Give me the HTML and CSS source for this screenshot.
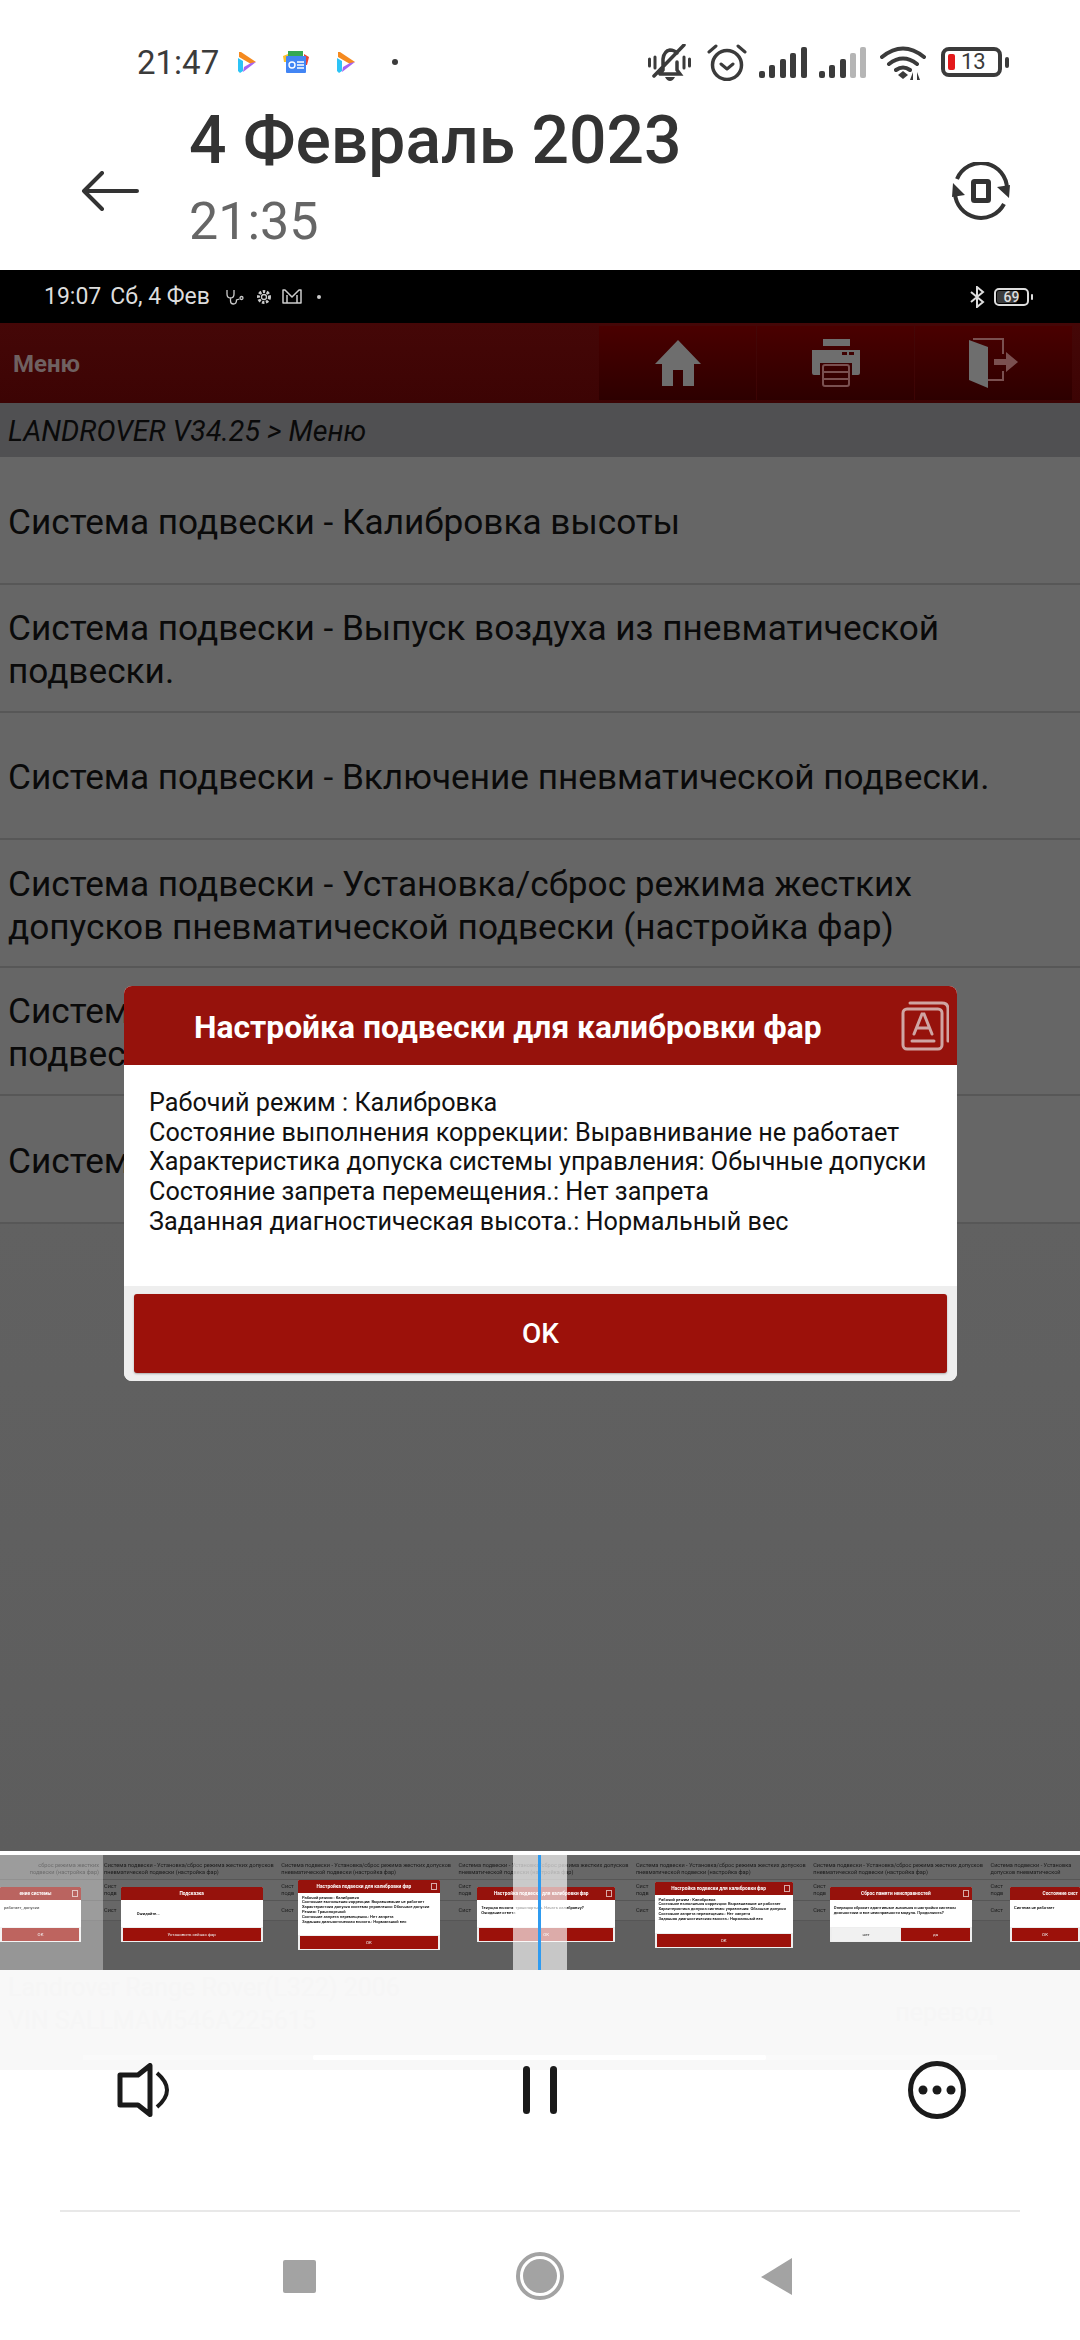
FILE: index.html
```html
<!DOCTYPE html>
<html lang="ru">
<head>
<meta charset="utf-8">
<title>4 Февраль 2023</title>
<link rel="stylesheet" href="styles.css">
</head>
<body>
<div class="app">
  <section class="top">
    <div class="sb">
      <span class="sb-time">21:47</span>
      <svg class="i-play1" width="18" height="21" viewBox="0 0 18 21"><path fill="#f58a1f" d="M1 0h2l15 10-5 2L1 5z"/><path fill="#2cc3f6" d="M0 6l5 3v10l-3 2-2-2z"/><path fill="#a663f3" d="M6 15l7-4 5-1L5 20z"/></svg>
      <svg class="i-news" width="26" height="22" viewBox="0 0 26 22"><path fill="#34a853" d="M5 0h15v5H5z"/><path fill="#fbc02d" d="M0 5l5-2v8H1z"/><path fill="#ea4335" d="M21 3l5 3-2 8h-3z"/><rect x="3" y="5" width="20" height="17" rx="1" fill="#4285f4"/><circle cx="9" cy="14" r="3" fill="none" stroke="#fff" stroke-width="1.4"/><path stroke="#fff" stroke-width="1.3" d="M14 11h7M14 14h7M14 17h7"/></svg>
      <svg class="i-play2" width="18" height="21" viewBox="0 0 18 21"><path fill="#f58a1f" d="M1 0h2l15 10-5 2L1 5z"/><path fill="#2cc3f6" d="M0 6l5 3v10l-3 2-2-2z"/><path fill="#a663f3" d="M6 15l7-4 5-1L5 20z"/></svg>
      <span class="sb-dot"></span>
      <span class="sb-right">
        <svg width="43" height="37" viewBox="0 0 43 37" fill="none" stroke="#3b3b3b" stroke-linecap="round"><path stroke-width="3" d="M1.500 15v7M7 13v11M36 13v11M41.500 15v7"/><path stroke-width="3.500" d="M12 30l3-4v-11q1-8 7-9 4 0 7 3M29 18v8l3 4H12M36 1L6 32"/><path fill="#3b3b3b" stroke="none" d="M17 33h10q-2 4-5 4t-5-4z"/></svg>
        <svg class="m16" width="40" height="37" viewBox="0 0 40 37" fill="none" stroke="#3b3b3b" stroke-linecap="round" stroke-linejoin="round"><circle cx="20" cy="21" r="14.500" stroke-width="3.500"/><path stroke-width="3" d="M14 20l6 5 6-5M2 8l7-6M38 8l-7-6"/></svg>
        <svg class="m12" width="48" height="31" viewBox="0 0 48 31" fill="#3b3b3b"><rect y="24" width="6" height="7" rx="2"/><rect x="10" y="18" width="6" height="13" rx="2"/><rect x="21" y="12" width="6" height="19" rx="2"/><rect x="31" y="6" width="6" height="25" rx="2"/><rect x="42" y="0" width="6" height="31" rx="2"/></svg>
        <svg class="m12" width="47" height="31" viewBox="0 0 47 31" fill="#3b3b3b"><rect y="24" width="6" height="7" rx="2"/><rect x="10" y="18" width="6" height="13" rx="2"/><rect x="21" y="12" width="6" height="19" rx="2"/><rect x="31" y="6" width="6" height="25" rx="2" fill="#b5b5b5"/><rect x="41" y="0" width="6" height="31" rx="2" fill="#b5b5b5"/></svg>
        <svg class="m14" width="46" height="35" viewBox="0 0 46 35" fill="none" stroke="#3b3b3b" stroke-width="4" stroke-linecap="round"><path d="M2 12q21-17 42 0M9 19q14-11 28 0M16 25q7-5 14 0"/><path fill="#3b3b3b" stroke="none" d="M23 26l5 4-5 4-5-4zM33 27v8h-3zM37 27l3 8h-3z"/></svg>
        <span class="batt"><span class="batt-red"></span><span class="batt-num">13</span></span>
        <span class="batt-tip"></span>
      </span>
    </div>
    <div class="hdr">
      <svg class="back" width="58" height="40" viewBox="0 0 58 40" fill="none" stroke="#333" stroke-width="4" stroke-linecap="round" stroke-linejoin="round"><path d="M21 2L3 20l18 18M3 20h53"/></svg>
      <div class="hdr-text">
        <div class="hdr-title">4 Февраль 2023</div>
        <div class="hdr-sub">21:35</div>
      </div>
      <svg class="rot" width="58" height="58" viewBox="0 0 58 58" fill="none" stroke="#333"><path stroke-width="4" d="M5 17A26 26 0 0 1 55 27M52 42A26 26 0 0 1 3 31"/><path fill="#333" stroke="none" d="M45 25l13-2-1 13zM13 33L0 35l1-14z"/><rect x="21.500" y="19.500" width="15" height="19" rx="1" stroke-width="5"/></svg>
    </div>
  </section>

  <section class="shot">
    <div class="blk">
      <span class="blk-time">19:07</span><span class="blk-date">Сб, 4 Фев</span>
      <svg class="i-steth" width="18" height="16" viewBox="0 0 18 16" fill="none" stroke="#ccc" stroke-width="1.300"><path d="M1 1v4q0 4 3.500 4T8 5V1M4.500 9v3q0 3 3 3t3-4l3-1"/><circle cx="15.500" cy="9" r="1.500"/></svg>
      <svg class="i-gear" width="18" height="18" viewBox="0 0 18 18" fill="none" stroke="#ccc"><circle cx="9" cy="9" r="5.500" stroke-width="3" stroke-dasharray="2.500 1.500"/><circle cx="9" cy="9" r="2.500" stroke-width="1.300"/></svg>
      <svg class="i-m" width="20" height="15" viewBox="0 0 20 15" fill="none" stroke="#ccc" stroke-width="1.500" stroke-linejoin="round"><path d="M1 14V1h2l7 7 7-7h2v13zM5 14V6M15 14V6"/></svg>
      <span class="blk-dot"></span>
      <span class="blk-right">
        <svg width="15" height="22" viewBox="0 0 15 22" fill="none" stroke="#ddd" stroke-width="2"><path d="M1 6l12 10-6 5V1l6 5L1 16"/></svg>
        <span class="mbatt"><span class="mbatt-fill"></span><span class="mbatt-num">69</span></span>
        <span class="mbatt-tip"></span>
      </span>
    </div>
    <div class="bar">
      <span class="bar-title">Меню</span>
      <div class="tools">
        <div class="tool"><svg width="46" height="46" viewBox="0 0 46 46" fill="#6e6e6e"><path d="M23 0L46 24h-7v22H28V30H18v16H7V24H0z"/></svg></div>
        <div class="tool"><svg width="48" height="48" viewBox="0 0 48 48"><path fill="#6e6e6e" d="M11 0h27v7H11zM0 11h48v23q0 2-2 2h-6V24H8v12H2q-2 0-2-2z"/><rect x="11" y="26" width="26" height="21" rx="2" fill="none" stroke="#7a5050" stroke-width="2"/><path stroke="#7a5050" stroke-width="2" d="M11 33h26M11 40h26"/><path fill="#3f0000" d="M30 13h5v3h-5zM37 13h5v3h-5z"/></svg></div>
        <div class="tool"><svg width="50" height="50" viewBox="0 0 50 50"><path fill="none" stroke="#7a5050" stroke-width="2" d="M4 1h30v15M34 33v9H18"/><path fill="#6e6e6e" d="M0 2l19 7v41L0 42z"/><path fill="#7a5050" d="M25 21h12v-7l12 10-12 10v-7H25z"/></svg></div>
      </div>
    </div>
    <div class="path">LANDROVER V34.25 &gt; Меню</div>
    <div class="list">
      <div class="row">Система подвески - Калибровка высоты</div>
      <div class="row">Система подвески - Выпуск воздуха из пневматической подвески.</div>
      <div class="row">Система подвески - Включение пневматической подвески.</div>
      <div class="row">Система подвески - Установка/сброс режима жестких допусков пневматической подвески (настройка фар)</div>
      <div class="row">Система подвески - Настройка высоты<br>подвески</div>
      <div class="row">Система подвески - Сброс памяти неисправностей</div>
    </div>
    <div class="dlg">
      <div class="dlg-head">
        <span class="dlg-title">Настройка подвески для калибровки фар</span>
        <svg class="dlg-icon" width="48" height="50" viewBox="0 0 48 50" fill="none" stroke="#cfa5a3" stroke-width="3" stroke-linecap="round"><rect x="2" y="8" width="39" height="40" rx="4"/><path d="M9 2h32q6 0 6 6v32"/><path d="M13 33l8-20h2l8 20M16 27h12M11 40h22"/></svg>
      </div>
      <div class="dlg-body">
        <div>Рабочий режим : Калибровка</div>
        <div>Состояние выполнения коррекции: Выравнивание не работает</div>
        <div>Характеристика допуска системы управления: Обычные допуски</div>
        <div>Состояние запрета перемещения.: Нет запрета</div>
        <div>Заданная диагностическая высота.: Нормальный вес</div>
      </div>
      <div class="dlg-foot"><div class="dlg-btn">OK</div></div>
    </div>
  </section>

  <div class="sep"></div>

  <section class="strip">
    <div class="track">
      <div class="thumb t-first">
        <div class="t-row t-r1"><p class="t-end">сброс режима жестких</p><p class="t-end">подвески (настройка фар)</p></div>
        <div class="t-row t-r2"></div>
        <div class="t-row t-r3"></div>
        <div class="t-wrap t-wrap-l"><div class="t-dlg t-w81"><div class="t-head t-has-ico">ение системы<span class="t-ico"></span></div><div class="t-body t-b1"><p>работает, допуски</p></div><div class="t-foot"><span class="t-btn">OK</span></div></div></div>
      </div>
      <div class="thumb">
        <div class="t-row t-r1">Система подвески - Установка/сброс режима жестких допусков пневматической подвески (настройка фар)</div>
        <div class="t-row t-r2">Сист<br>подв</div>
        <div class="t-row t-r3">Сист</div>
        <div class="t-wrap"><div class="t-dlg t-w142"><div class="t-head">Подсказка</div><div class="t-body t-b1"><p class="t-ind">Ожидайте...</p></div><div class="t-foot"><span class="t-btn">Установить сейчас фар</span></div></div></div>
      </div>
      <div class="thumb">
        <div class="t-row t-r1">Система подвески - Установка/сброс режима жестких допусков пневматической подвески (настройка фар)</div>
        <div class="t-row t-r2">Сист<br>подв</div>
        <div class="t-row t-r3">Сист</div>
        <div class="t-wrap"><div class="t-dlg t-w142"><div class="t-head t-has-ico">Настройка подвески для калибровки фар<span class="t-ico"></span></div><div class="t-body t-b2"><p>Рабочий режим : Калибровка</p><p>Состояние выполнения коррекции: Выравнивание не работает</p><p>Характеристика допуска системы управления: Обычные допуски</p><p>Режим: Транспортный</p><p>Состояние запрета перемещения.: Нет запрета</p><p>Заданная диагностическая высота.: Нормальный вес</p></div><div class="t-foot"><span class="t-btn">OK</span></div></div></div>
      </div>
      <div class="thumb">
        <div class="t-row t-r1">Система подвески - Установка/сброс режима жестких допусков пневматической подвески (настройка фар)</div>
        <div class="t-row t-r2">Сист<br>подв</div>
        <div class="t-row t-r3">Сист</div>
        <div class="t-wrap"><div class="t-dlg t-w138"><div class="t-head t-has-ico">Настройка подвески для калибровки фар<span class="t-ico"></span></div><div class="t-body t-b1"><p>Текущая высота: транспортная. Начать калибровку?</p><p>Ожидание ответа</p></div><div class="t-foot"><span class="t-btn">OK</span></div></div></div>
      </div>
      <div class="thumb">
        <div class="t-row t-r1">Система подвески - Установка/сброс режима жестких допусков пневматической подвески (настройка фар)</div>
        <div class="t-row t-r2">Сист<br>подв</div>
        <div class="t-row t-r3">Сист</div>
        <div class="t-wrap"><div class="t-dlg t-w138"><div class="t-head t-has-ico">Настройка подвески для калибровки фар<span class="t-ico"></span></div><div class="t-body t-b3"><p>Рабочий режим : Калибровка</p><p>Состояние выполнения коррекции: Выравнивание не работает</p><p>Характеристика допуска системы управления: Обычные допуски</p><p>Состояние запрета перемещения.: Нет запрета</p><p>Заданная диагностическая высота.: Нормальный вес</p></div><div class="t-foot"><span class="t-btn">OK</span></div></div></div>
      </div>
      <div class="thumb">
        <div class="t-row t-r1">Система подвески - Установка/сброс режима жестких допусков пневматической подвески (настройка фар)</div>
        <div class="t-row t-r2">Сист<br>подв</div>
        <div class="t-row t-r3">Сист</div>
        <div class="t-wrap"><div class="t-dlg t-w142"><div class="t-head t-has-ico">Сброс памяти неисправностей<span class="t-ico"></span></div><div class="t-body t-b1"><p>Операция сбросит адаптивные значения и настройки системы диагностики и все неисправности модуля. Продолжить?</p></div><div class="t-foot t-two"><span class="t-btn t-no">нет</span><span class="t-btn">да</span></div></div></div>
      </div>
      <div class="thumb t-last">
        <div class="t-row t-r1">Система подвески - Установка<br>допусков пневматической</div>
        <div class="t-row t-r2">Сист<br>подв</div>
        <div class="t-row t-r3">Сист</div>
        <div class="t-wrap t-wrap-r"><div class="t-dlg t-w70"><div class="t-head t-head-l">Состояние сист</div><div class="t-body t-b1"><p>Система не работает</p></div><div class="t-foot"><span class="t-btn">OK</span></div></div></div>
      </div>
    </div>
    <div class="veil-left"></div>
    <div class="veil-mid"></div>
    <div class="playhead"></div>
  </section>

  <section class="info">
    <div class="info-meta">
      <div class="info-text">
        <div>Landrover Range Rover(L322) 2006</div>
        <div>VIN SALLMAM546A225615</div>
      </div>
      <div class="info-tr">перевод</div>
    </div>
    <div class="prog"><div class="prog-on"></div></div>
  </section>

  <section class="ctl">
    <svg width="52" height="54" viewBox="0 0 52 54" fill="none" stroke="#1a1a1a" stroke-width="5" stroke-linejoin="round"><path d="M3 12h18L33 2.500v49L21 42H3z"/><path stroke-width="4" d="M40 10q20 17 0 34"/></svg>
    <svg width="34" height="48" viewBox="0 0 34 48" fill="#1a1a1a"><rect width="7" height="48" rx="3.500"/><rect x="27" width="7" height="48" rx="3.500"/></svg>
    <svg width="58" height="58" viewBox="0 0 58 58" fill="#1a1a1a"><circle cx="29" cy="29" r="26.500" fill="none" stroke="#1a1a1a" stroke-width="5"/><circle cx="15" cy="29" r="4.500"/><circle cx="29" cy="29" r="4.500"/><circle cx="43" cy="29" r="4.500"/></svg>
  </section>

  <div class="rule"></div>

  <nav class="nav">
    <svg width="33" height="33" viewBox="0 0 33 33"><rect width="33" height="33" rx="2" fill="#a3a3a3"/></svg>
    <svg width="48" height="48" viewBox="0 0 48 48"><circle cx="24" cy="24" r="22" fill="none" stroke="#a3a3a3" stroke-width="4"/><circle cx="24" cy="24" r="17" fill="#a3a3a3"/></svg>
    <svg width="31" height="37" viewBox="0 0 31 37"><path fill="#a3a3a3" d="M31 0v37L0 19z"/></svg>
  </nav>
</div>
</body>
</html>
```
FILE: styles.css
```css
* { box-sizing: border-box; }
html, body { margin: 0; padding: 0; background: #fff; }
body { font-family: Roboto, "Noto Sans", sans-serif; }
.app { width: 1080px; height: 2340px; overflow: hidden; display: flex; flex-direction: column; background: #fff; }

/* top app header */
.top { height: 270px; flex: none; background: #fff; display: flex; flex-direction: column; }
.sb { height: 76px; margin-top: 24px; padding-left: 137px; display: flex; align-items: center; flex: none; }
.sb-time { font-size: 33px; color: #3b3b3b; width: 84px; }
.i-play1 { margin-left: 17px; }
.i-news { margin-left: 27px; }
.i-play2 { margin-left: 28px; }
.sb-dot { width: 6px; height: 6px; border-radius: 50%; background: #3b3b3b; margin-left: 37px; }
.sb-right { margin-left: auto; width: 432px; display: flex; align-items: center; }
.m16 { margin-left: 16px; }
.m12 { margin-left: 12px; }
.m14 { margin-left: 14px; }
.batt { margin-left: 15px; width: 61px; height: 30px; border: 4px solid #3b3b3b; border-radius: 8px; display: flex; align-items: center; padding-left: 3px; }
.batt-red { width: 7px; height: 16px; background: #e3191b; border-radius: 2px; }
.batt-num { margin-left: 6px; font-size: 22px; color: #3b3b3b; line-height: 1; }
.batt-tip { width: 4px; height: 11px; margin-left: 3px; background: #3b3b3b; border-radius: 2px; }

.hdr { flex: 1; display: flex; align-items: center; padding-left: 81px; }
.back { margin-top: 12px; }
.hdr-text { margin-left: 50px; display: flex; flex-direction: column; margin-top: -14px; }
.hdr-title { font-size: 66px; font-weight: 500; color: #333; line-height: 76px; }
.hdr-sub { font-size: 52px; color: #666; line-height: 62px; margin-top: 12px; }
.rot { margin-left: auto; margin-right: 70px; margin-top: 12px; }

/* captured screen */
.shot { position: relative; height: 1581px; flex: none; background: linear-gradient(#676767, #5d5d5d); display: flex; flex-direction: column; }
.blk { height: 53px; flex: none; background: #000; display: flex; align-items: center; padding-left: 44px; color: #ddd; font-size: 23px; }
.blk-date { margin-left: 9px; }
.i-steth { margin-left: 16px; }
.i-gear { margin-left: 11px; }
.i-m { margin-left: 9px; }
.blk-dot { width: 4px; height: 4px; border-radius: 50%; background: #ccc; margin-left: 15px; }
.blk-right { margin-left: auto; display: flex; align-items: center; padding-right: 47px; }
.mbatt { margin-left: 9px; position: relative; width: 35px; height: 18px; border: 2px solid #ddd; border-radius: 5px; display: flex; align-items: center; justify-content: center; overflow: hidden; }
.mbatt-fill { position: absolute; left: 1px; top: 1px; bottom: 1px; width: 20px; background: #3c3c3c; border-radius: 2px; }
.mbatt-num { position: relative; font-size: 14px; color: #ddd; font-weight: 500; line-height: 1; }
.mbatt-tip { width: 2px; height: 6px; margin-left: 2px; background: #ddd; border-radius: 1px; }

.bar { height: 80px; flex: none; background: linear-gradient(#450707, #3c0404); display: flex; align-items: stretch; }
.bar-title { flex: 1; font-size: 24px; font-weight: 700; color: #6f6161; padding-left: 13px; padding-top: 2px; align-self: center; }
.tools { display: flex; gap: 1px; padding-right: 8px; padding-top: 3px; padding-bottom: 3px; }
.tool { width: 157px; display: flex; align-items: center; justify-content: center; background: linear-gradient(#4a0000, #2d0000); }

.path { height: 54px; flex: none; background: #505052; color: #0a0a0a; font-style: italic; font-size: 28.600px; padding-left: 8px; padding-top: 2px; display: flex; align-items: center; }
.list { flex: none; background: #666; }
.row { height: 127.750px; padding: 5px 8px 0; border-bottom: 2px solid #575757; color: #0a0a0a; font-size: 35.200px; line-height: 43px; display: flex; align-items: center; }

/* dialog */
.dlg { position: absolute; left: 124px; top: 716px; width: 833px; height: 395px; background: #fff; border-radius: 8px; overflow: hidden; display: flex; flex-direction: column; }
.dlg-head { height: 79px; flex: none; background: #96120c; display: flex; align-items: center; position: relative; }
.dlg-title { margin-left: 70px; color: #fff; font-size: 31.800px; font-weight: 700; padding-top: 2px; }
.dlg-icon { position: absolute; right: 8px; top: 15px; }
.dlg-body { flex: 1; padding: 23px 25px 0; font-size: 25.200px; line-height: 29.700px; color: #111; }
.dlg-foot { height: 95px; flex: none; background: #eee; padding: 8px 10px; }
.dlg-btn { height: 79px; background: #9c110a; border-radius: 3px; display: flex; align-items: center; justify-content: center; color: #fff; font-size: 28px; font-weight: 500; box-shadow: 0 1px 2px #aaa; }

/* filmstrip */
.sep { height: 4px; flex: none; background: #fff; }
.strip { position: relative; height: 115px; flex: none; overflow: hidden; background: #5f5f5f; }
.track { display: flex; width: 1080px; height: 100%; filter: blur(0.4px); }
.thumb { position: relative; flex: none; width: 177.300px; height: 100%; background: #5f5f5f; overflow: hidden; }
.t-first { width: 103px; }
.t-last { flex: 1; width: auto; }
.t-row { padding: 0 1px; font-size: 5.600px; line-height: 7px; color: #1c1c1c; background: #676767; border-bottom: 1px solid #565656; }
.t-row p { margin: 0; }
.t-end { text-align: right; padding-right: 3px; }
.t-r1 { height: 25px; padding-top: 7px; }
.t-r2 { height: 21px; padding-top: 3px; }
.t-r3 { height: 20px; padding-top: 6px; }
.t-wrap { position: absolute; inset: 4px 0 0; display: flex; align-items: center; justify-content: center; }
.t-wrap-l { justify-content: flex-start; }
.t-wrap-r { justify-content: flex-end; }
.t-dlg { background: #fff; border-radius: 1px; display: flex; flex-direction: column; overflow: hidden; }
.t-w142 { width: 142px; }
.t-w138 { width: 138px; }
.t-w81 { width: 81px; }
.t-w70 { width: 70px; }
.t-head { height: 13px; flex: none; background: #96120c; color: #fff; font-size: 4.800px; font-weight: 700; line-height: 13px; text-align: center; position: relative; }
.t-head-l { text-align: right; padding-right: 2px; }
.t-has-ico { padding-right: 10px; }
.t-ico { position: absolute; right: 3px; top: 3px; width: 6px; height: 7px; border: 1px solid #d8a9a6; }
.t-body { color: #000; font-size: 4.100px; font-weight: 500; line-height: 4.900px; padding: 3px 4px 0; }
.t-body p { margin: 0; }
.t-ind { padding: 6px 12px; }
.t-b1 { height: 27px; padding-top: 6px; }
.t-b2 { height: 42px; }
.t-b3 { height: 38px; }
.t-foot { height: 15px; flex: none; background: #eee; padding: 1px 2px 1px; display: flex; gap: 1px; }
.t-btn { flex: 1; background: #9c110a; color: #eee; font-size: 4.400px; line-height: 13px; text-align: center; }
.t-no { background: #f1f1f1; color: #222; }
.veil-left { position: absolute; left: 0; top: 0; bottom: 0; width: 103px; background: rgba(255, 255, 255, 0.35); }
.veil-mid { position: absolute; left: 513px; top: 0; bottom: 0; width: 54px; background: rgba(255, 255, 255, 0.65); }
.playhead { position: absolute; left: 538px; top: 0; bottom: 0; width: 3px; background: #2f9bf0; }

/* faded metadata */
.info { height: 100px; flex: none; background: #f8f8f8; display: flex; flex-direction: column; }
.info-meta { height: 85px; flex: none; display: flex; align-items: center; padding: 0 87px 18px 8px; color: #f6f6f6; justify-content: space-between; font-size: 25px; }
.info-text { line-height: 33px; }
.info-tr { padding-top: 18px; }
.prog { height: 5px; flex: none; margin: 0 83px; background: #fafafa; padding-left: 230px; }
.prog-on { width: 453px; height: 5px; background: #fff; border-radius: 2px; }

/* player controls */
.ctl { flex: none; height: 140px; margin-top: -9px; padding-left: 117px; display: grid; grid-template-columns: 406px 385px auto; align-items: center; align-content: start; position: relative; }
.rule { height: 2px; flex: none; margin: 9px 60px 0; background: #e8e8e8; }
.nav { flex: 1; padding-left: 283px; display: grid; grid-template-columns: 233px 245px auto; align-items: center; }
```
